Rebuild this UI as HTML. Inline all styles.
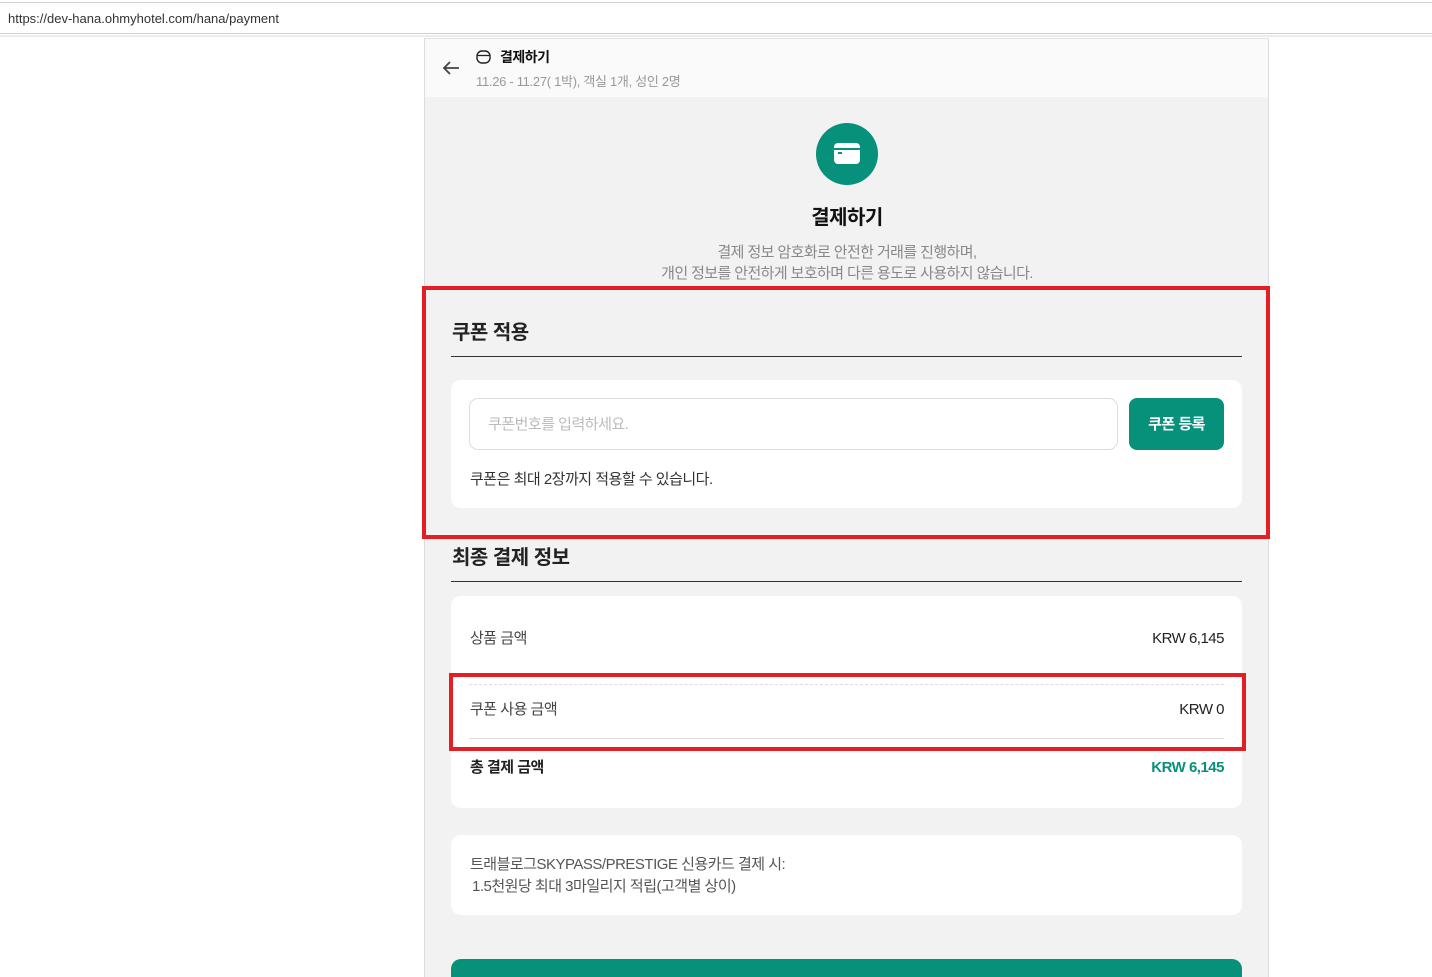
<!DOCTYPE html>
<html><head><meta charset="utf-8"><style>
*{margin:0;padding:0;box-sizing:border-box}
html,body{width:1432px;height:977px;overflow:hidden}
body{background:#fff;font-family:"Liberation Sans","Noto Sans CJK KR",sans-serif;position:relative;letter-spacing:-0.5px}
.a{position:absolute}
.t{position:absolute;white-space:nowrap;line-height:1}
</style></head><body>
<div class="a" style="left:0;top:2px;width:1432px;height:32px;border-top:1px solid #d0d0d0;border-bottom:1px solid #cfcfcf;background:#fff"></div>
<div class="t" style="left:8px;top:12px;font-size:13px;color:#333;letter-spacing:0">https://dev-hana.ohmyhotel.com/hana/payment</div>
<div class="a" style="left:0;top:35px;width:1432px;height:2px;background:#ececec"></div>

<div class="a" style="left:424px;top:38px;width:845px;height:939px;background:#f2f2f2;border-left:1px solid #ddd;border-right:1px solid #ddd"></div>
<div class="a" style="left:425px;top:38px;width:843px;height:59px;background:#fafafa;border-top:1px solid #e2e2e2"></div>
<svg class="a" style="left:441px;top:59px" width="20" height="18" viewBox="0 0 20 18"><path d="M18 9H3M9 3L3 9l6 6" stroke="#444" stroke-width="1.8" fill="none"/></svg>
<svg class="a" style="left:476px;top:50px" width="15" height="14" viewBox="0 0 15 14"><rect x="1" y="1" width="13" height="12" rx="5" stroke="#222" stroke-width="1.4" fill="none"/><path d="M1.5 5.5h12" stroke="#222" stroke-width="1.3"/></svg>
<div class="t" style="left:500px;top:50px;font-size:14px;font-weight:bold;color:#111">결제하기</div>
<div class="t" style="left:476px;top:75px;font-size:13px;color:#999;letter-spacing:-0.3px">11.26 - 11.27( 1박), 객실 1개, 성인 2명</div>

<div class="a" style="left:816px;top:123px;width:62px;height:62px;border-radius:50%;background:#07907a"></div>
<div class="a" style="left:834px;top:143px;width:26px;height:21px;border-radius:4px;background:#fff"></div>
<div class="a" style="left:834px;top:148px;width:26px;height:2px;background:#07907a"></div>
<div class="a" style="left:838px;top:152px;width:4px;height:2px;background:#07907a"></div>
<div class="t" style="left:0;width:1694px;text-align:center;top:208px;font-size:20px;font-weight:bold;color:#111">결제하기</div>
<div class="t" style="left:0;width:1694px;text-align:center;top:245px;font-size:15px;color:#888;letter-spacing:-0.6px">결제 정보 암호화로 안전한 거래를 진행하며,</div>
<div class="t" style="left:0;width:1694px;text-align:center;top:266px;font-size:15px;color:#888;letter-spacing:-0.6px">개인 정보를 안전하게 보호하며 다른 용도로 사용하지 않습니다.</div>

<div class="t" style="left:452px;top:323px;font-size:20px;font-weight:bold;color:#222">쿠폰 적용</div>
<div class="a" style="left:451px;top:356px;width:791px;height:1px;background:#333"></div>
<div class="a" style="left:451px;top:380px;width:791px;height:128px;background:#fff;border-radius:10px"></div>
<div class="a" style="left:469px;top:398px;width:649px;height:52px;border:1px solid #ddd;border-radius:9px;background:#fff"></div>
<div class="t" style="left:488px;top:417px;font-size:15px;color:#bbb">쿠폰번호를 입력하세요.</div>
<div class="a" style="left:1129px;top:398px;width:95px;height:52px;border-radius:8px;background:#07907a"></div>
<div class="t" style="left:1129px;width:95px;text-align:center;top:417px;font-size:15px;font-weight:bold;color:#fff">쿠폰 등록</div>
<div class="t" style="left:470px;top:472px;font-size:15px;color:#333">쿠폰은 최대 2장까지 적용할 수 있습니다.</div>
<div class="a" style="left:422px;top:286px;width:848px;height:253px;border:4px solid #e31e24"></div>

<div class="t" style="left:452px;top:548px;font-size:20px;font-weight:bold;color:#222">최종 결제 정보</div>
<div class="a" style="left:451px;top:581px;width:791px;height:1px;background:#333"></div>
<div class="a" style="left:451px;top:596px;width:791px;height:212px;background:#fff;border-radius:10px"></div>
<div class="t" style="left:470px;top:631px;font-size:15px;color:#444">상품 금액</div>
<div class="t" style="right:208px;top:631px;font-size:15px;color:#222">KRW 6,145</div>
<div class="a" style="left:469px;top:684px;width:755px;border-top:1px dashed #ddd"></div>
<div class="t" style="left:470px;top:702px;font-size:15px;color:#444">쿠폰 사용 금액</div>
<div class="t" style="right:208px;top:702px;font-size:15px;color:#222">KRW 0</div>
<div class="a" style="left:469px;top:738px;width:755px;height:1px;background:#ddd"></div>
<div class="t" style="left:470px;top:760px;font-size:15px;font-weight:bold;color:#222">총 결제 금액</div>
<div class="t" style="right:208px;top:760px;font-size:15px;font-weight:bold;color:#07907a">KRW 6,145</div>
<div class="a" style="left:449px;top:673px;width:797px;height:78px;border:4px solid #e31e24"></div>

<div class="a" style="left:451px;top:835px;width:791px;height:80px;background:#fff;border-radius:10px"></div>
<div class="t" style="left:470px;top:857px;font-size:15px;color:#555">트래블로그SKYPASS/PRESTIGE 신용카드 결제 시:</div>
<div class="t" style="left:472px;top:879px;font-size:15px;color:#555">1.5천원당 최대 3마일리지 적립(고객별 상이)</div>

<div class="a" style="left:451px;top:959px;width:791px;height:18px;background:#07907a;border-radius:10px 10px 0 0"></div>
</body></html>
